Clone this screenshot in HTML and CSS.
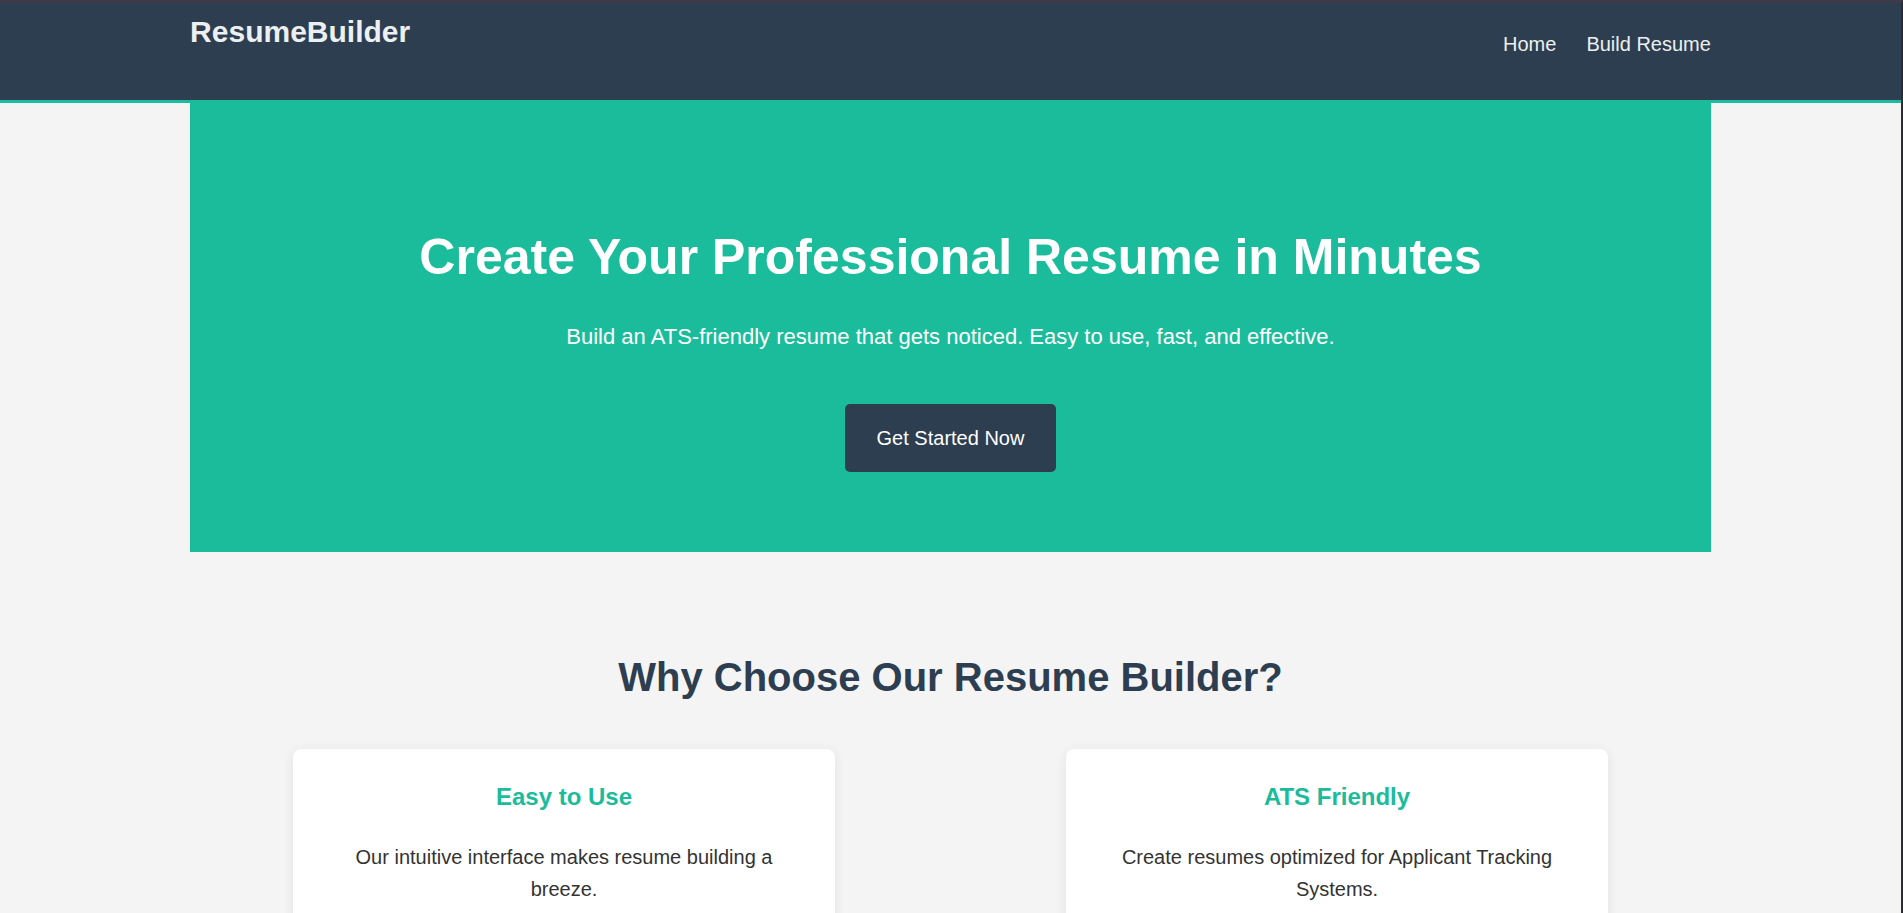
FILE: index.html
```html
<!DOCTYPE html>
<html lang="en">
<head>
<meta charset="utf-8">
<title>ResumeBuilder</title>
<link rel="stylesheet" href="styles.css">
</head>
<body>
<header class="site-header">
  <div class="container header-inner">
    <div class="logo">ResumeBuilder</div>
    <nav class="nav">
      <a href="#" class="nav-link">Home</a>
      <a href="#" class="nav-link">Build Resume</a>
    </nav>
  </div>
</header>

<main>
  <section class="container hero">
    <h1 class="hero-title">Create Your Professional Resume in Minutes</h1>
    <p class="hero-sub">Build an ATS-friendly resume that gets noticed. Easy to use, fast, and effective.</p>
    <a href="#" class="btn">Get Started Now</a>
  </section>

  <section class="features">
    <h2 class="features-title">Why Choose Our Resume Builder?</h2>
    <div class="feature-grid">
      <div class="card">
        <h3 class="card-title">Easy to Use</h3>
        <p class="card-text">Our intuitive interface makes resume building a breeze.</p>
      </div>
      <div class="card">
        <h3 class="card-title">ATS Friendly</h3>
        <p class="card-text">Create resumes optimized for Applicant Tracking Systems.</p>
      </div>
    </div>
  </section>
</main>
</body>
</html>
```

FILE: styles.css
```css
html {
  border-top: 3px solid #3e3a49;
  border-right: 2px solid #2b2b35;
  background: #f4f4f4;
}

body {
  margin: 0;
  background: #f4f4f4;
  font-family: "Liberation Sans", Arial, sans-serif;
  color: #333;
}

.container {
  width: 80%;
  margin: 0 auto;
}

.site-header {
  background: #2c3e50;
  height: 100px;
  box-sizing: border-box;
  border-bottom: 3px solid #1abc9c;
  padding-top: 12px;
}

.header-inner {
  display: flex;
  justify-content: space-between;
  align-items: flex-start;
}

.logo {
  font-size: 30px;
  line-height: 34px;
  font-weight: bold;
  color: #ecf0f1;
}

.nav {
  display: flex;
  gap: 30px;
  margin-top: 18px;
}

.nav-link {
  color: #ecf0f1;
  text-decoration: none;
  font-size: 20px;
  line-height: 23px;
}

.hero {
  background: #1abc9c;
  color: #fff;
  text-align: center;
  padding: 125px 0 80px;
}

.hero-title {
  margin: 0 0 38px;
  font-size: 50px;
  line-height: 58px;
  font-weight: bold;
}

.hero-sub {
  margin: 0 0 54px;
  font-size: 22px;
  line-height: 26px;
}

.btn {
  display: inline-block;
  background: #2c3e50;
  color: #fff;
  text-decoration: none;
  font-size: 20px;
  line-height: 23px;
  padding: 22.5px 32px;
  border-radius: 5px;
}

.features {
  padding: 102px 0 60px;
  text-align: center;
}

.features-title {
  margin: 0 0 49px;
  font-size: 40px;
  line-height: 46px;
  font-weight: bold;
  color: #2c3e50;
}

.feature-grid {
  display: flex;
  justify-content: center;
  gap: 231px;
}

.card {
  flex: 0 0 542px;
  box-sizing: border-box;
  background: #fff;
  border-radius: 8px;
  padding: 34px 40px;
  box-shadow: 0 2px 12px rgba(0, 0, 0, 0.08);
}

.card-title {
  margin: 0 0 30px;
  font-size: 24px;
  line-height: 28px;
  font-weight: bold;
  color: #1abc9c;
}

.card-text {
  margin: 0;
  font-size: 20px;
  line-height: 32px;
  color: #333;
}
```
